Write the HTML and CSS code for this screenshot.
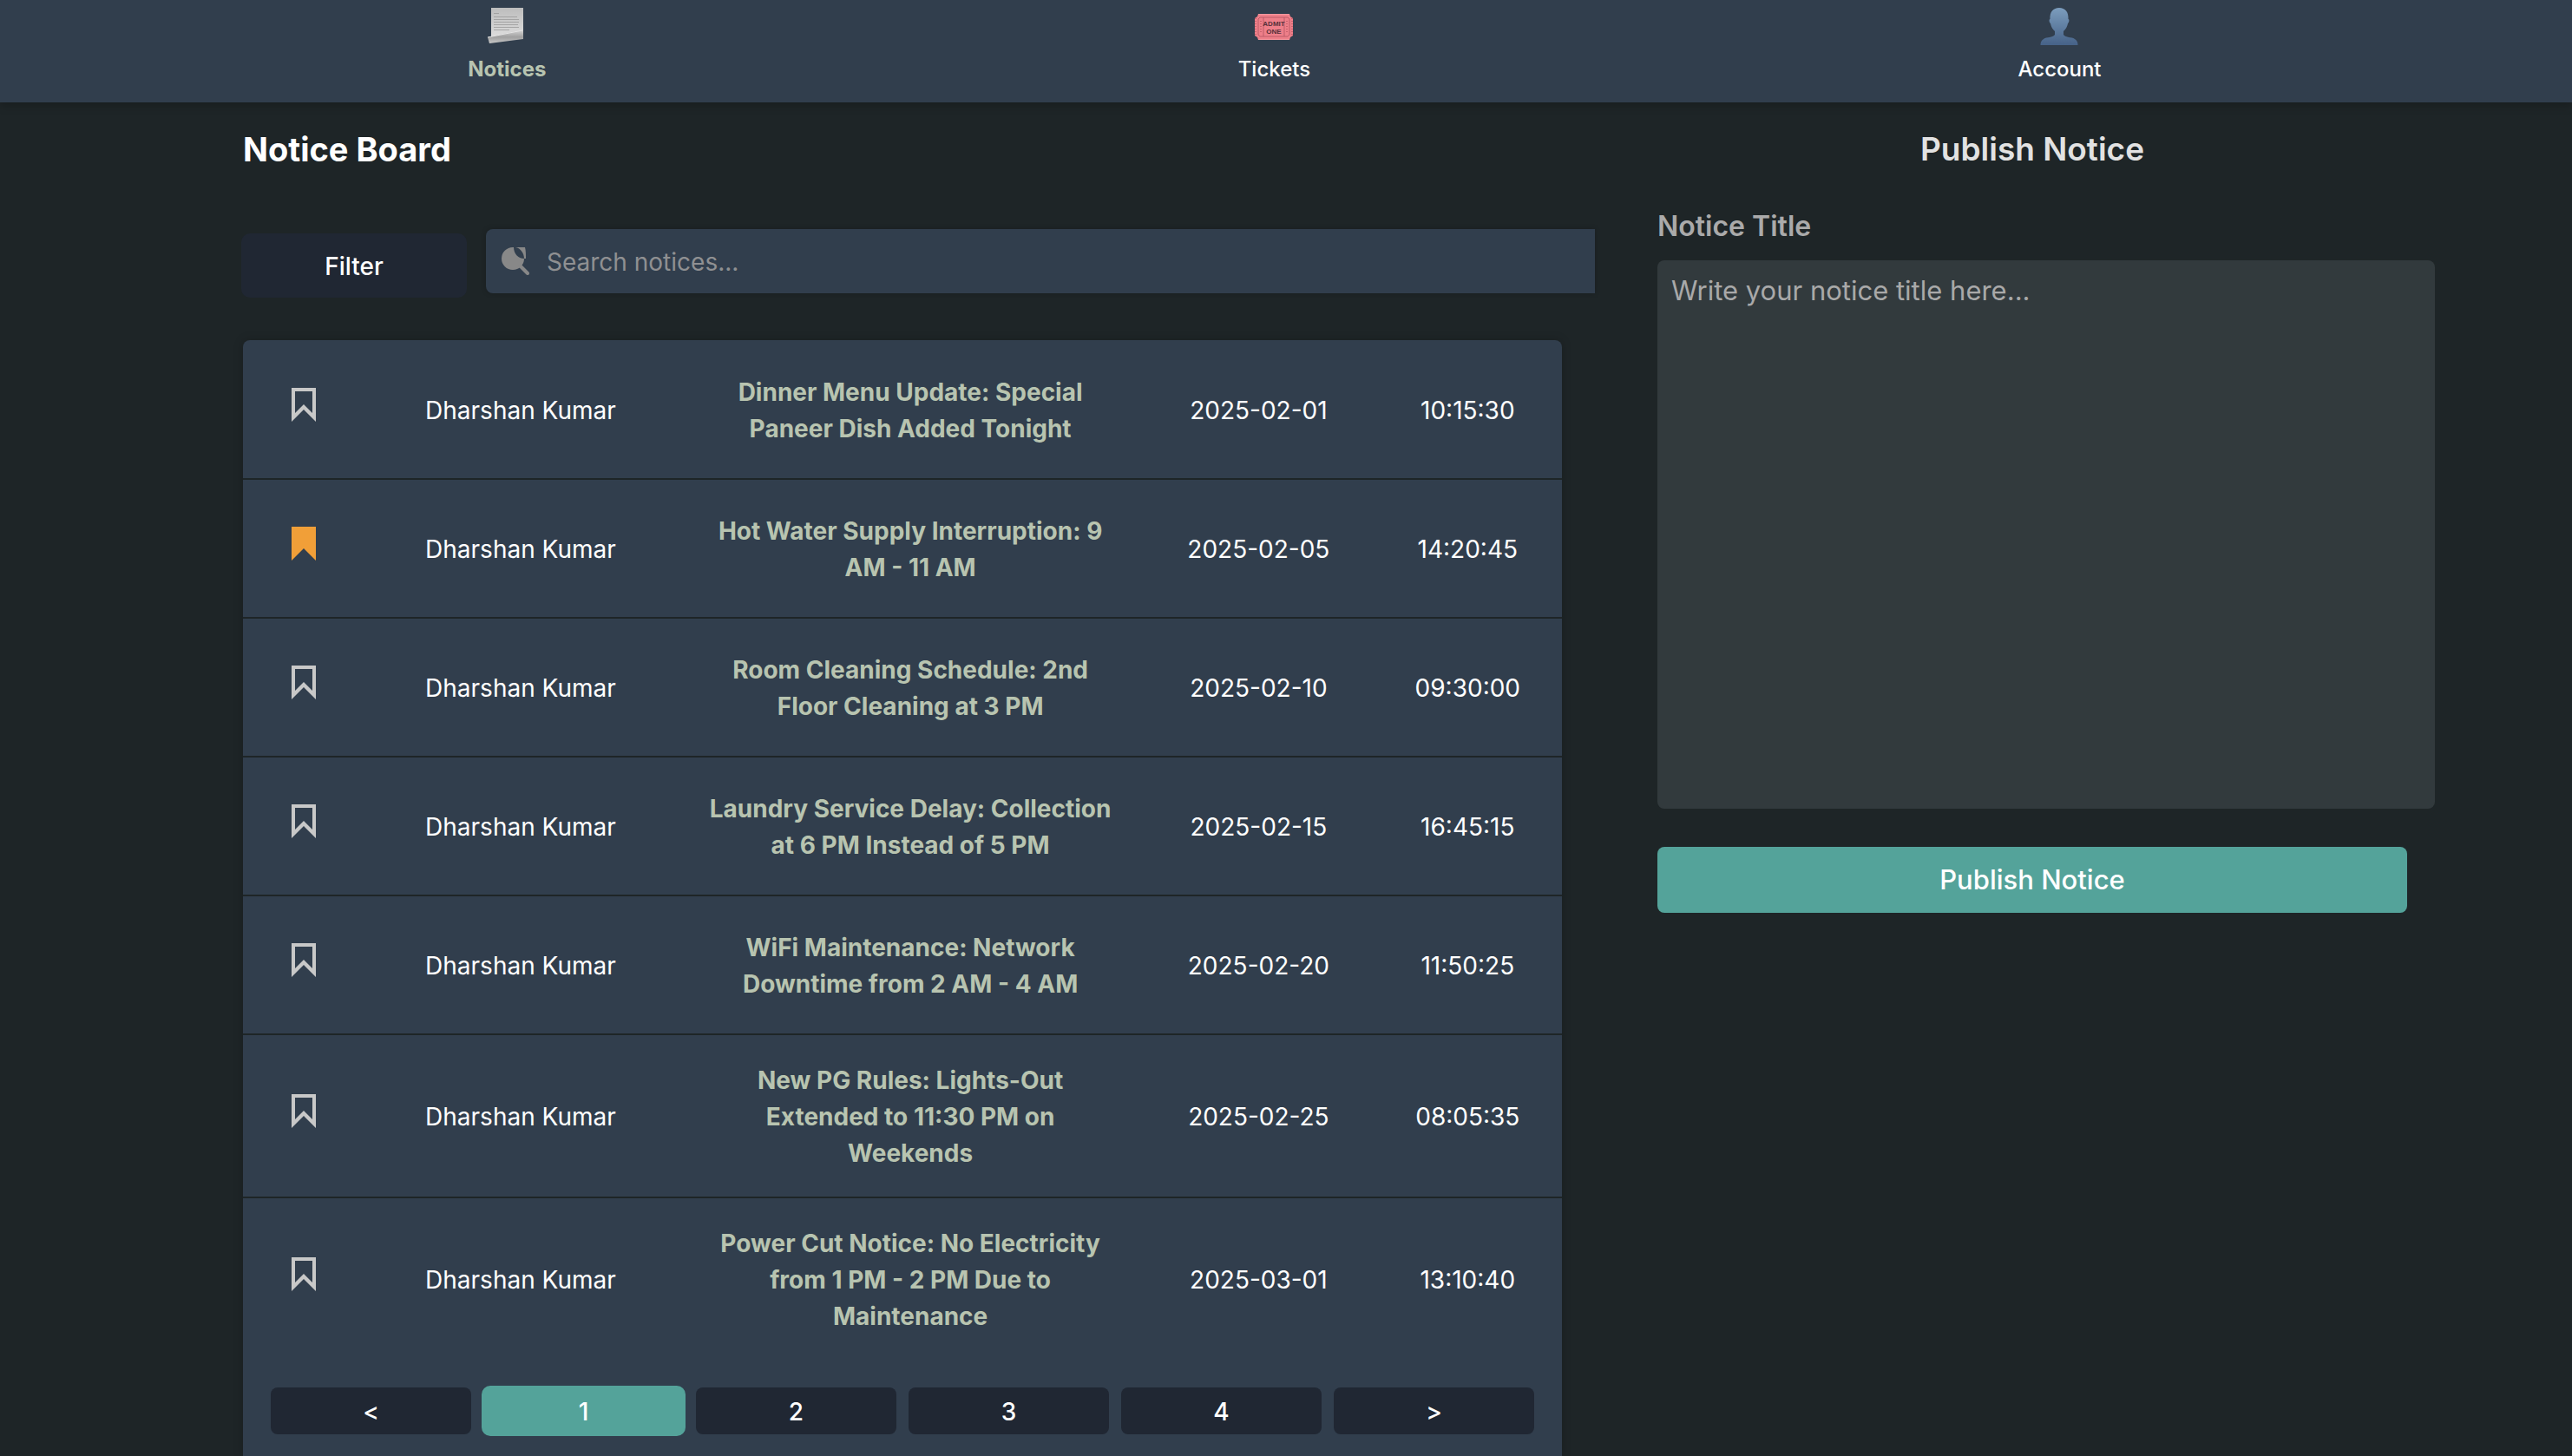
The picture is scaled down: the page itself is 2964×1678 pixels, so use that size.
FILE: index.html
```html
<!DOCTYPE html>
<html lang="en">
<head>
<meta charset="utf-8">
<meta name="viewport" content="width=device-width, initial-scale=1">
<title>Notice Board</title>
<link rel="stylesheet" href="styles.css">
</head>
<body>
<svg class="defs" aria-hidden="true">
  <symbol id="bookmark" viewBox="0 0 28 39"><path fill-rule="evenodd" d="M0 0H28V39L14 25L0 39ZM4 4V29L14 19L24 29V4Z"/></symbol>
  <symbol id="bookmark-filled" viewBox="0 0 28 39"><path d="M0 0H28V39L14 25L0 39Z"/></symbol>
</svg>
<nav class="nav">
  <a class="nav-item nav-item-active" href="#notices">
    <svg class="nav-icon" viewBox="0 0 48 50" aria-hidden="true">
      <defs><linearGradient id="paper" x1="0" y1="0" x2="0" y2="1"><stop offset="0" stop-color="#bdbdbd"/><stop offset="1" stop-color="#dedede"/></linearGradient>
      <linearGradient id="roll" x1="0" y1="0" x2="0" y2="1"><stop offset="0" stop-color="#d8d8d8"/><stop offset=".55" stop-color="#a0a0a0"/><stop offset="1" stop-color="#c8c8c8"/></linearGradient></defs>
      <path fill="url(#paper)" d="M6 7H43V40L6 42Z"/>
      <path stroke="#9b9b9b" d="M9 13.500H15M9 17.500H36M9 20.500H38M9 23.500H38M9 26.500H37M9 29.500H38M9 32.500H27" opacity=".8"/>
      <path fill="url(#roll)" d="M2 41L43 32V43L4 48Z"/>
      <path stroke="#e4e4e4" d="M2 41L42 33"/>
    </svg>
    <span>Notices</span>
  </a>
  <a class="nav-item" href="#tickets">
    <svg class="nav-icon" viewBox="0 0 48 50" aria-hidden="true">
      <g transform="translate(0 -1)">
      <path fill="#ee7f89" d="M6 15H42L43 18L46 20V40L43 42L42 45H6L5 42L2 40V20L5 18Z"/>
      <path fill="none" stroke="#bd5c68" d="M8 19H40L42 21V39L40 41H8L6 39V21ZM12 19V41M36 19V41"/>
      <path fill="none" stroke="#f1969d" d="M6 15.500H42M6 44.500H42"/>
      <path fill="none" stroke="#c9616d" stroke-width="2" stroke-dasharray="1 2" d="M3 20V40M45 20V40M9 23V37M39 23V37"/>
      <text class="ticket-text" x="24" y="29">ADMIT</text>
      <text class="ticket-text" x="24" y="38">ONE</text>
      </g>
    </svg>
    <span>Tickets</span>
  </a>
  <a class="nav-item" href="#account">
    <svg class="nav-icon" viewBox="0 0 48 50" aria-hidden="true">
      <defs><linearGradient id="person" x1="0" y1="0" x2="0" y2="1"><stop offset="0" stop-color="#7c9dbd"/><stop offset="1" stop-color="#466288"/></linearGradient></defs>
      <path fill="url(#person)" d="M24 7C31 7 35 12 34.500 20C36 20 35.500 24 34 25C33 30 31 32 29 34V38C32 42 38 40 42 43C45 45 45.500 47 45.500 50H2.500C2.500 47 3 45 6 43C10 40 16 42 19 38V34C17 32 15 30 14 25C12.500 24 12 20 13.500 20C13 12 17 7 24 7Z"/>
    </svg>
    <span>Account</span>
  </a>
</nav>
<main class="layout">
  <section class="board">
    <h1 class="board-title">Notice Board</h1>
    <div class="toolbar">
      <button class="filter" type="button">Filter</button>
      <label class="search">
        <svg class="search-icon" viewBox="0 0 32 32" aria-hidden="true">
          <path d="M13 0H14C14 7 19 13 26 13A13 13 0 1 1 13 0Z"/>
          <path d="M16 0H27C28 4 28 8 28 13H26C26 7 22 1 16 0Z"/>
          <path class="search-handle" d="M22 22L30 30"/>
        </svg>
        <input class="search-input" type="search" placeholder="Search notices..." aria-label="Search notices">
      </label>
    </div>
    <div class="card">
      <table class="notices">
        <colgroup><col class="col-mark"><col class="col-name"><col class="col-title"><col class="col-date"><col class="col-time"></colgroup>
        <tbody>
          <tr><td><button class="mark" type="button" aria-label="Bookmark"><svg><use href="#bookmark"/></svg></button></td><td>Dharshan Kumar</td><td class="title">Dinner Menu Update: Special Paneer Dish Added Tonight</td><td>2025-02-01</td><td>10:15:30</td></tr>
          <tr><td><button class="mark mark-on" type="button" aria-label="Remove bookmark"><svg><use href="#bookmark-filled"/></svg></button></td><td>Dharshan Kumar</td><td class="title">Hot Water Supply Interruption: 9 AM - 11 AM</td><td>2025-02-05</td><td>14:20:45</td></tr>
          <tr><td><button class="mark" type="button" aria-label="Bookmark"><svg><use href="#bookmark"/></svg></button></td><td>Dharshan Kumar</td><td class="title">Room Cleaning Schedule: 2nd Floor Cleaning at 3 PM</td><td>2025-02-10</td><td>09:30:00</td></tr>
          <tr><td><button class="mark" type="button" aria-label="Bookmark"><svg><use href="#bookmark"/></svg></button></td><td>Dharshan Kumar</td><td class="title">Laundry Service Delay: Collection at 6 PM Instead of 5 PM</td><td>2025-02-15</td><td>16:45:15</td></tr>
          <tr><td><button class="mark" type="button" aria-label="Bookmark"><svg><use href="#bookmark"/></svg></button></td><td>Dharshan Kumar</td><td class="title">WiFi Maintenance: Network Downtime from 2 AM - 4 AM</td><td>2025-02-20</td><td>11:50:25</td></tr>
          <tr><td><button class="mark" type="button" aria-label="Bookmark"><svg><use href="#bookmark"/></svg></button></td><td>Dharshan Kumar</td><td class="title">New PG Rules: Lights-Out Extended to 11:30 PM on Weekends</td><td>2025-02-25</td><td>08:05:35</td></tr>
          <tr><td><button class="mark" type="button" aria-label="Bookmark"><svg><use href="#bookmark"/></svg></button></td><td>Dharshan Kumar</td><td class="title">Power Cut Notice: No Electricity from 1 PM - 2 PM Due to Maintenance</td><td>2025-03-01</td><td>13:10:40</td></tr>
        </tbody>
      </table>
      <div class="pages">
        <button class="page" type="button" aria-label="Previous page">&lt;</button>
        <button class="page page-on" type="button">1</button>
        <button class="page" type="button">2</button>
        <button class="page" type="button">3</button>
        <button class="page" type="button">4</button>
        <button class="page" type="button" aria-label="Next page">&gt;</button>
      </div>
    </div>
  </section>
  <form class="publish">
    <h2 class="publish-title">Publish Notice</h2>
    <label class="publish-label" for="notice-title">Notice Title</label>
    <textarea class="publish-text" id="notice-title" placeholder="Write your notice title here..."></textarea>
    <button class="publish-button" type="button">Publish Notice</button>
  </form>
</main>
</body>
</html>
```
FILE: styles.css
```css
* { box-sizing: border-box; }

body {
  margin: 0;
  min-height: 100vh;
  display: flex;
  flex-direction: column;
  background: #1e2527;
  color: #fff;
  font-family: Inter, "Liberation Sans", sans-serif;
  font-size: 28px;
  line-height: 42px;
}

button, input, textarea { font: inherit; color: inherit; border: 0; margin: 0; }
button { cursor: pointer; }

.defs { position: absolute; width: 0; height: 0; }

.nav {
  display: grid;
  grid-template-columns: 884fr 884fr 926fr;
  height: 118px;
  padding: 2px 4.3% 0 4.8%;
  background: #313e4d;
  box-shadow: 0 4px 10px rgba(0, 0, 0, .2);
}
.nav-item {
  justify-self: center;
  display: flex;
  flex-direction: column;
  align-items: center;
  gap: 12px;
  color: #fff;
  font-size: 24px;
  line-height: 32px;
  font-weight: 500;
  text-decoration: none;
}
.nav-item-active { color: #b8c4b0; font-weight: 700; }
.nav-icon { width: 48px; height: 50px; }
.ticket-text {
  font: 700 8px "Liberation Sans Narrow", "Liberation Sans", sans-serif;
  text-anchor: middle;
  fill: #54303a;
}

.layout {
  flex: 1;
  display: flex;
  gap: 110px;
  padding: 30px 190px 0 280px;
}
.board {
  flex: 1520;
  min-width: 0;
  display: flex;
  flex-direction: column;
}
.board-title, .publish-title {
  margin: 0;
  font-size: 38px;
  line-height: 48px;
  font-weight: 700;
}
.toolbar {
  display: flex;
  align-items: flex-start;
  gap: 22px;
  margin: 68px -38px 49px -2px;
}
.filter {
  width: 260px;
  height: 74px;
  padding: 2px 0 0;
  margin-top: 5px;
  border-radius: 10px;
  background: #202733;
  font-weight: 500;
}
.search {
  flex: 1;
  display: flex;
  align-items: center;
  gap: 20px;
  height: 74px;
  padding-left: 18px;
  border-radius: 8px 0 0 8px;
  background: #313e4d;
  box-shadow: 0 0 6px rgba(0, 0, 0, .2);
}
.search-icon { width: 32px; height: 32px; fill: #888; }
.search-handle { stroke: #888; stroke-width: 4; stroke-linecap: round; }
.search-input {
  flex: 1;
  min-width: 0;
  padding: 2px 0 0;
  background: none;
  outline: 0;
}
.search-input::placeholder { color: #8f9092; }

.card {
  flex: 1;
  padding-top: 1px;
  border-radius: 8px 8px 0 0;
  background: #313e4d;
  box-shadow: 0 0 12px rgba(0, 0, 0, .2);
}
.notices {
  width: 100%;
  table-layout: fixed;
  border-collapse: separate;
  border-spacing: 0;
  text-align: center;
}
.col-mark { width: 9.2%; }
.col-name { width: 23.7%; }
.col-title { width: 35.4%; }
.col-date { width: 17.4%; }
.col-time { width: 14.3%; }
.notices td {
  height: 160px;
  padding: 31px 28px 29px;
  border-bottom: 2px solid #1e2527;
  vertical-align: middle;
}
.notices tr:last-child td { border-bottom: 0; }
.notices .title { padding: 31px 32px 29px; color: #b8c4b0; font-weight: 700; }
.mark {
  display: block;
  margin: 0 auto;
  padding: 0 0 14px;
  background: none;
  color: #c8c8c8;
}
.mark-on { color: #f19f38; }
.mark svg { display: block; width: 28px; height: 39px; fill: currentColor; }

.pages {
  display: flex;
  gap: 14px;
  padding: 32px 32px 24px;
}
.page {
  flex: 1;
  height: 54px;
  padding: 2px 0 0;
  border-radius: 8px;
  background: #202733;
  font-weight: 500;
}
.page-on { background: #54a39a; box-shadow: 0 0 0 2px #54a39a; }

.publish { flex: 864; min-width: 0; }
.publish-title { color: #e2e2e2; font-size: 37px; font-weight: 600; text-align: center; }
.publish-label {
  display: block;
  margin: 44px 0 18px;
  color: #aaa;
  font-size: 32px;
  line-height: 42px;
  font-weight: 600;
}
.publish-text {
  display: block;
  box-sizing: content-box;
  width: 100%;
  height: 600px;
  padding: 16px;
  border-radius: 8px;
  background: #323a3d;
  font-size: 31px;
  line-height: 38px;
  resize: none;
}
.publish-text::placeholder { color: #a9a9a9; }
.publish-button {
  display: block;
  width: 100%;
  height: 76px;
  margin-top: 44px;
  border-radius: 8px;
  background: #54a39a;
  font-size: 31px;
  font-weight: 500;
}
```
